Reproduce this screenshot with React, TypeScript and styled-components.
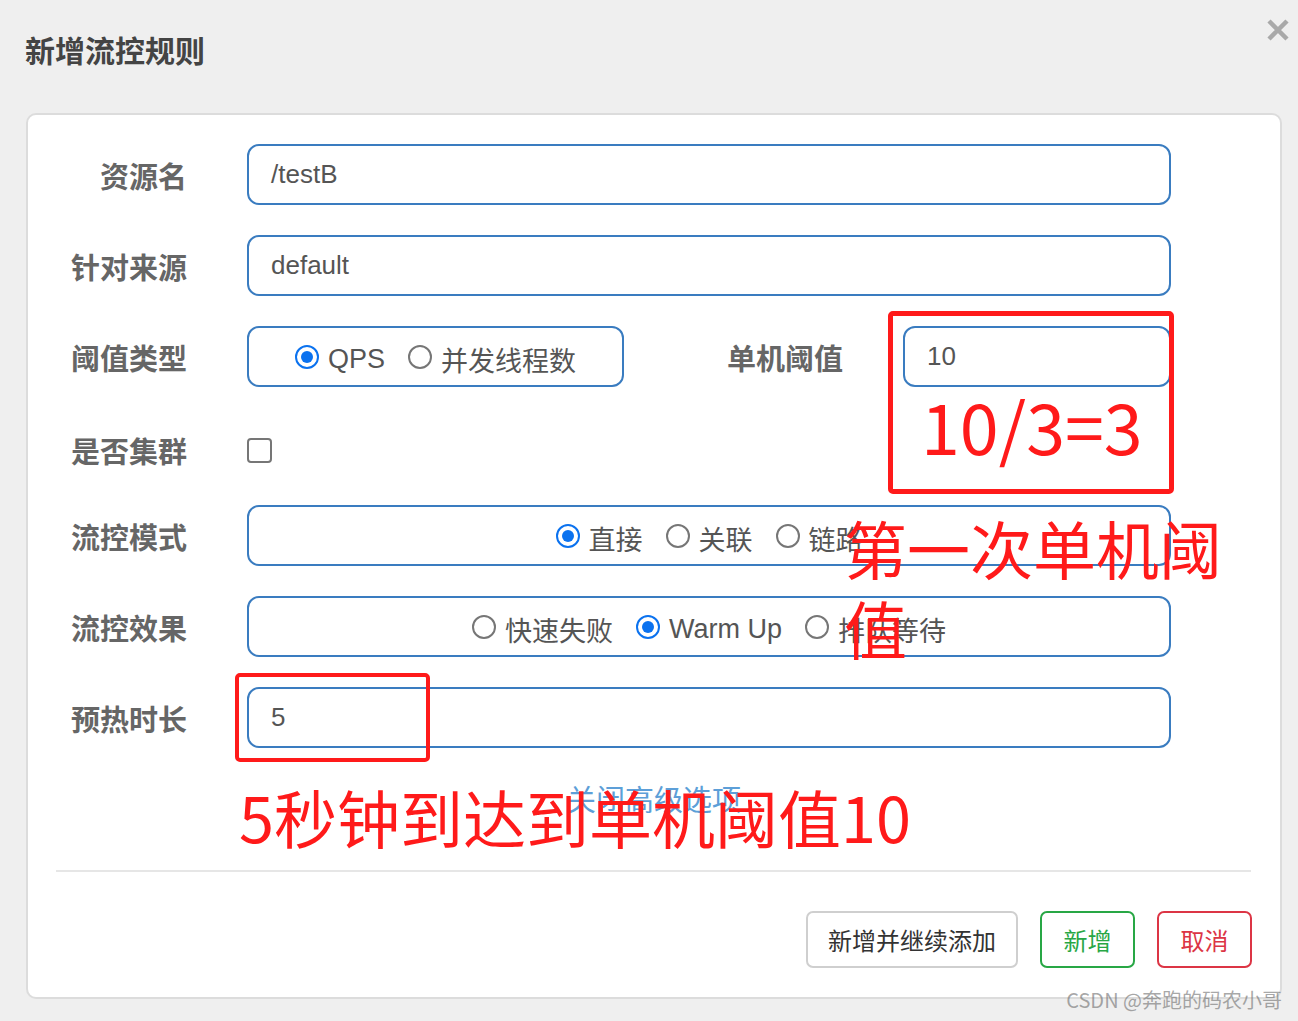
import * as React from 'react';
import styled, {createGlobalStyle} from 'styled-components';

const GlobalStyle = createGlobalStyle`
    html, body {
        margin: 0;
        padding: 0;
        background: #efefef;
    }
    body {
        font-family: "Noto Sans CJK SC", "Liberation Sans", sans-serif;
    }
`;

const RED = '#ff1a1a';
const BLUE = '#3a7cc0';

const StyledPage = styled.div`
    position: relative;
    width: 1298px;
    height: 1021px;
    overflow: hidden;
    background: #efefef;
`;

const StyledHeader = styled.div`
    display: flex;
    justify-content: space-between;
    align-items: flex-start;
    box-sizing: border-box;
    height: 113px;
    padding: 29px 8px 0 25px;
`;

const StyledTitle = styled.h1`
    margin: 0;
    font-size: 30px;
    line-height: 40px;
    font-weight: 700;
    color: #444;
`;

const StyledClose = styled.button`
    margin-top: -11px;
    padding: 0;
    border: none;
    background: none;
    width: 24px;
    height: 24px;
    display: flex;
`;

const StyledCard = styled.div`
    position: relative;
    box-sizing: border-box;
    width: 1256px;
    height: 886px;
    margin-left: 26px;
    padding-top: 29px;
    background: #fff;
    border: 2px solid #dcdcdc;
    border-radius: 10px;
`;

const StyledForm = styled.div`
    display: flex;
    flex-direction: column;
    gap: 30px;
`;

const StyledRow = styled.div<{$height?: number; $shift?: number}>`
    box-sizing: border-box;
    display: grid;
    grid-template-columns: 159px 924px;
    column-gap: 60px;
    align-items: center;
    height: ${p => p.$height ?? 61}px;
    padding-top: ${p => p.$shift ?? 0}px;
`;

const StyledLabel = styled.div`
    text-align: right;
    font-size: 29px;
    font-weight: 700;
    color: #666;
    white-space: nowrap;
`;

const StyledInput = styled.div`
    box-sizing: border-box;
    height: 61px;
    display: flex;
    align-items: center;
    padding-left: 22px;
    border: 2px solid ${BLUE};
    border-radius: 12px;
    font-family: "Liberation Sans", "Noto Sans CJK SC", sans-serif;
    font-size: 26px;
    color: #555;
`;

const StyledRadioBox = styled.div<{$width?: number}>`
    box-sizing: border-box;
    height: 61px;
    ${p => (p.$width ? `width: ${p.$width}px;` : '')}
    display: flex;
    justify-content: center;
    align-items: center;
    gap: 23px;
    padding-top: 5px;
    border: 2px solid ${BLUE};
    border-radius: 12px;
`;

const StyledSplit = styled.div`
    display: flex;
    align-items: center;
`;

const StyledInlineLabel = styled(StyledLabel)`
    width: 219px;
    margin-right: 60px;
`;

const StyledRadioItem = styled.label`
    display: flex;
    align-items: center;
    gap: 9px;
    font-family: "Liberation Sans", "Noto Sans CJK SC", sans-serif;
    font-size: 27px;
    color: #555;
    white-space: nowrap;
`;

const StyledRadioDot = styled.span<{$checked: boolean}>`
    box-sizing: border-box;
    width: 24px;
    height: 24px;
    margin-top: -4px;
    border-radius: 50%;
    display: flex;
    align-items: center;
    justify-content: center;
    background: #fff;
    border: ${p => (p.$checked ? '2.5px solid #0b72ef' : '2px solid #767676')};
    &::after {
        content: '';
        width: 12px;
        height: 12px;
        border-radius: 50%;
        background: ${p => (p.$checked ? '#0b72ef' : 'transparent')};
    }
`;

const StyledCheckbox = styled.span`
    box-sizing: border-box;
    width: 25px;
    height: 25px;
    border: 2px solid #767676;
    border-radius: 4px;
    background: #fff;
`;

const StyledLink = styled.div`
    margin-top: 30px;
    text-align: center;
    font-size: 29px;
    line-height: 40px;
    color: #5d9fd8;
`;

const StyledDivider = styled.hr`
    margin: 52px 29px 0 28px;
    border: none;
    border-top: 2px solid #e6e6e6;
`;

const StyledFooter = styled.div`
    display: flex;
    justify-content: flex-end;
    gap: 22px;
    margin-top: 39px;
    padding-right: 28px;
`;

const StyledButton = styled.button<{$color: string}>`
    box-sizing: border-box;
    height: 57px;
    padding: 0 20px;
    min-width: 95px;
    background: #fff;
    border: 2px solid ${p => (p.$color === '#333' ? '#cfcfcf' : p.$color)};
    border-radius: 7px;
    font-family: "Noto Sans CJK SC", sans-serif;
    font-size: 24px;
    color: ${p => p.$color};
`;

const StyledMarkBox = styled.div<{$border: number}>`
    position: absolute;
    box-sizing: border-box;
    border: ${p => p.$border}px solid ${RED};
    border-radius: 5px;
`;

const StyledMarkText = styled.div<{$size: number}>`
    position: absolute;
    font-family: "Noto Sans CJK SC", sans-serif;
    font-weight: 400;
    font-size: ${p => p.$size}px;
    line-height: 80px;
    color: ${RED};
`;

const StyledWatermark = styled.div`
    position: absolute;
    right: 16px;
    bottom: 7px;
    font-family: "Noto Sans CJK SC", "Liberation Sans", sans-serif;
    font-size: 20px;
    color: rgba(110, 110, 110, 0.6);
`;

function Radio({checked, children}: {checked?: boolean; children: React.ReactNode}) {
    return (
        <StyledRadioItem>
            <StyledRadioDot $checked={!!checked} />
            {children}
        </StyledRadioItem>
    );
}

export default function App() {
    return (
        <StyledPage>
            <GlobalStyle />
            <StyledHeader>
                <StyledTitle>新增流控规则</StyledTitle>
                <StyledClose aria-label="close">
                    <svg width="24" height="24" viewBox="0 0 24 24">
                        <path
                            d="M3 3 L21 21 M21 3 L3 21"
                            stroke="#a9a9a9"
                            strokeWidth="4.5"
                            strokeLinecap="butt"
                        />
                    </svg>
                </StyledClose>
            </StyledHeader>
            <StyledCard>
                <StyledForm>
                    <StyledRow>
                        <StyledLabel>资源名</StyledLabel>
                        <StyledInput>/testB</StyledInput>
                    </StyledRow>
                    <StyledRow>
                        <StyledLabel>针对来源</StyledLabel>
                        <StyledInput>default</StyledInput>
                    </StyledRow>
                    <StyledRow>
                        <StyledLabel>阈值类型</StyledLabel>
                        <StyledSplit>
                            <StyledRadioBox $width={377}>
                                <Radio checked>QPS</Radio>
                                <Radio>并发线程数</Radio>
                            </StyledRadioBox>
                            <StyledInlineLabel>单机阈值</StyledInlineLabel>
                            <StyledInput style={{flex: 1}}>10</StyledInput>
                        </StyledSplit>
                    </StyledRow>
                    <StyledRow $height={58} $shift={8}>
                        <StyledLabel>是否集群</StyledLabel>
                        <StyledCheckbox />
                    </StyledRow>
                    <StyledRow>
                        <StyledLabel>流控模式</StyledLabel>
                        <StyledRadioBox>
                            <Radio checked>直接</Radio>
                            <Radio>关联</Radio>
                            <Radio>链路</Radio>
                        </StyledRadioBox>
                    </StyledRow>
                    <StyledRow>
                        <StyledLabel>流控效果</StyledLabel>
                        <StyledRadioBox>
                            <Radio>快速失败</Radio>
                            <Radio checked>Warm Up</Radio>
                            <Radio>排队等待</Radio>
                        </StyledRadioBox>
                    </StyledRow>
                    <StyledRow>
                        <StyledLabel>预热时长</StyledLabel>
                        <StyledInput>5</StyledInput>
                    </StyledRow>
                </StyledForm>
                <StyledLink>关闭高级选项</StyledLink>
                <StyledDivider />
                <StyledFooter>
                    <StyledButton $color="#333">新增并继续添加</StyledButton>
                    <StyledButton $color="#28a745">新增</StyledButton>
                    <StyledButton $color="#dc3545">取消</StyledButton>
                </StyledFooter>

                <StyledMarkBox $border={5} style={{left: 860, top: 196, width: 286, height: 183}} />
                <StyledMarkText $size={70} style={{left: 893, top: 270}}>
                    10/3=3
                </StyledMarkText>
                <StyledMarkText $size={63} style={{left: 816, top: 392, width: 400}}>
                    第一次单机阈值
                </StyledMarkText>
                <StyledMarkBox $border={4} style={{left: 207, top: 558, width: 195, height: 89}} />
                <StyledMarkText $size={63} style={{left: 211, top: 661, whiteSpace: 'nowrap'}}>
                    5秒钟到达到单机阈值10
                </StyledMarkText>
            </StyledCard>
            <StyledWatermark>CSDN @奔跑的码农小哥</StyledWatermark>
        </StyledPage>
    );
}
